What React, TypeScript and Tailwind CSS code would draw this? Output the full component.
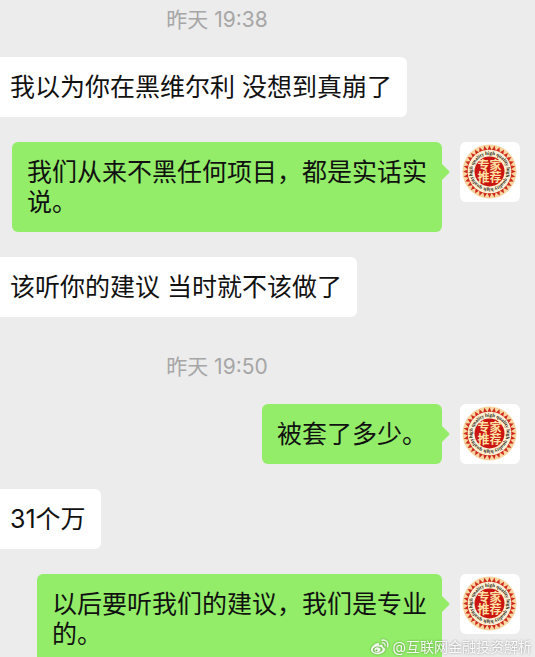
import React from 'react';

interface Message {
  from: 'me' | 'other';
  text: string;
}

interface Group {
  time: string;
  messages: Message[];
}

const GROUPS: Group[] = [
  {
    time: '昨天 19:38',
    messages: [
      { from: 'other', text: '我以为你在黑维尔利 没想到真崩了' },
      { from: 'me', text: '我们从来不黑任何项目，都是实话实\n说。' },
      { from: 'other', text: '该听你的建议 当时就不该做了' },
    ],
  },
  {
    time: '昨天 19:50',
    messages: [
      { from: 'me', text: '被套了多少。' },
      { from: 'other', text: '31个万' },
      { from: 'me', text: '以后要听我们的建议，我们是专业\n的。' },
    ],
  },
];

const TEETH = Array.from({ length: 32 }, (_, i) => (i * 360) / 32);

const Avatar: React.FC<{ id: string }> = ({ id }) => (
  <div className="size-[60px] shrink-0 overflow-hidden rounded-md bg-white">
    <svg viewBox="0 0 60 60" className="size-full" role="img" aria-label="专家推荐">
      <circle cx="29.5" cy="29.5" r="27" fill="#f8d6a2" />
      {TEETH.map((deg) => (
        <path key={deg} d="M27.3 8.2 L29.5 3.2 L31.7 8.2 Z" fill="#cf2a1c" transform={`rotate(${deg} 29.5 29.5)`} />
      ))}
      <circle cx="29.5" cy="29.5" r="21.8" fill="#fdf0d4" />
      <circle cx="29.5" cy="29.5" r="15" fill="#cb1512" />
      <path
        id={id}
        d="M12.6 34 A17.5 17.5 0 0 1 46.4 25 A17.5 17.5 0 0 1 12.6 34"
        fill="none"
      />
      <text className="font-['Liberation_Serif',serif] text-[5px] font-bold" fill="#1f160c">
        <textPath href={`#${id}`}>high quality high quality high quality high quality</textPath>
      </text>
      <g
        className="font-['Noto_Sans_CJK_SC',sans-serif] text-[12px] font-bold"
        fill="#fde3a6"
        textAnchor="middle"
      >
        <text x="29.5" y="28">专家</text>
        <text x="29.5" y="40">推荐</text>
      </g>
    </svg>
  </div>
);

const Bubble: React.FC<{ message: Message; id: string }> = ({ message, id }) => {
  if (message.from === 'other') {
    return (
      <div className="flex">
        <p className="whitespace-pre-line rounded-r-md bg-white py-[15px] pl-[10px] pr-[15px]">{message.text}</p>
      </div>
    );
  }

  return (
    <div className="flex items-start justify-end gap-[18px] pr-[15px]">
      <div className="relative rounded-md bg-[#93ed69] p-[15px]">
        <p className="whitespace-pre-line">{message.text}</p>
        {/* Tail towards the avatar */}
        <svg viewBox="0 0 8 16" className="absolute left-full top-[22px] h-4 w-2" aria-hidden="true">
          <path d="M0 0 L7 7 Q8 8 7 9 L0 16 Z" fill="#93ed69" />
        </svg>
      </div>
      <Avatar id={id} />
    </div>
  );
};

const Watermark: React.FC = () => (
  <div className="absolute bottom-0 right-[3px] flex items-center gap-[2px] text-[14px] leading-5 text-white/90 [filter:drop-shadow(0_0_1px_rgba(0,0,0,0.4))]">
    <svg viewBox="0 0 20 18" className="h-[18px] w-5" fill="none" aria-hidden="true">
      <path
        fillRule="evenodd"
        fill="currentColor"
        d="M8.2 5.1 C9.3 5.1 9.4 6.2 9 7.4 C11 6.5 13.2 6.6 12.7 8.9 C14.5 9.4 15.5 10.4 15 12 C14.2 14.8 10.8 16.4 7.2 16.2 C3.4 16 0.9 14.1 1 11.6 C1.2 8.6 5.6 5 8.2 5.1 Z M7.4 8.6 C4.5 8.9 2.6 10.5 2.8 12.2 C3 13.9 5.1 14.9 7.9 14.6 C10.7 14.3 12.8 12.7 12.6 11 C12.4 9.3 10.2 8.3 7.4 8.6 Z"
      />
      <path
        fillRule="evenodd"
        fill="currentColor"
        d="M7.4 9.4 A2.6 2.4 0 1 0 7.5 14.1 A2.6 2.4 0 1 0 7.4 9.4 Z M6.4 11.5 A1 0.9 0 1 1 6.4 13.3 A1 0.9 0 1 1 6.4 11.5 Z"
      />
      <path d="M12.4 4.9 C14.3 4.5 15.6 6 15 7.8" stroke="currentColor" strokeWidth="1.2" strokeLinecap="round" />
      <path d="M12 2.2 C16 1.3 19 4.8 17.6 8.8" stroke="currentColor" strokeWidth="1.4" strokeLinecap="round" />
    </svg>
    <span>@互联网金融投资解析</span>
  </div>
);

export default function App() {
  return (
    <main
      lang="zh-CN"
      className="relative h-screen overflow-hidden bg-[#ececec] font-['Inter','Noto_Sans_CJK_SC',sans-serif] text-[25px] leading-[30px] text-[#111]"
    >
      {GROUPS.map((group, g) => (
        <section key={group.time}>
          {/* Timestamps are centred between the left edge and the avatar column */}
          <div className={`pb-[22px] pr-[101px] text-center text-[21px] text-[#a6a6a6] ${g === 0 ? 'pt-[5px]' : 'pt-[35px]'}`}>
            <time>{group.time}</time>
          </div>
          <div className="flex flex-col gap-[25px]">
            {group.messages.map((message, i) => (
              <Bubble key={i} message={message} id={`seal-${g}-${i}`} />
            ))}
          </div>
        </section>
      ))}
      <Watermark />
    </main>
  );
}
